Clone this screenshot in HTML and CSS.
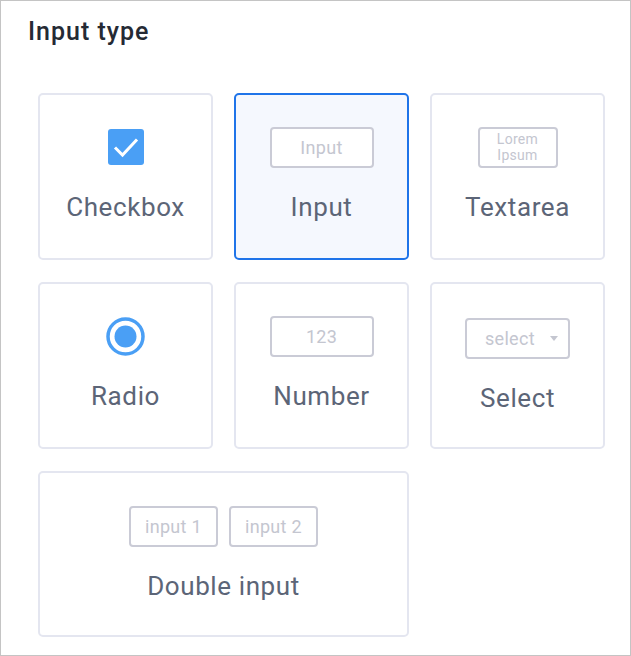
FILE: index.html
```html
<html>
<head>
    <meta charset="utf-8">
    <title>Input type</title>
    <link rel="stylesheet" href="styles.css">
</head>
<body>
    <div class="frame">
        <div class="title">Input type</div>
        <div class="types">
            <div class="card">
                <div class="preview">
                    <svg class="check" width="36" height="36" viewBox="0 0 36 36">
                        <rect x="0" y="0" width="36" height="36" rx="3" fill="#4a9ff5"/>
                        <path d="M7 18.5 L14.5 26 L29 10.5" fill="none" stroke="#fff" stroke-width="3"/>
                    </svg>
                </div>
                <div class="label">Checkbox</div>
            </div>
            <div class="card active">
                <div class="preview">
                    <div class="mini">Input</div>
                </div>
                <div class="label">Input</div>
            </div>
            <div class="card">
                <div class="preview">
                    <div class="mini area">Lorem<br>Ipsum</div>
                </div>
                <div class="label">Textarea</div>
            </div>
            <div class="card">
                <div class="preview">
                    <svg width="39" height="39" viewBox="0 0 39 39">
                        <circle cx="19.5" cy="19.5" r="17.5" fill="none" stroke="#4a9ff5" stroke-width="3.5"/>
                        <circle cx="19.5" cy="19.5" r="11" fill="#4a9ff5"/>
                    </svg>
                </div>
                <div class="label">Radio</div>
            </div>
            <div class="card">
                <div class="preview">
                    <div class="mini">123</div>
                </div>
                <div class="label">Number</div>
            </div>
            <div class="card low">
                <div class="preview">
                    <div class="mini sel">select<span class="arrow"></span></div>
                </div>
                <div class="label">Select</div>
            </div>
            <div class="card wide">
                <div class="preview pair">
                    <div class="mini half">input 1</div>
                    <div class="mini half">input 2</div>
                </div>
                <div class="label">Double input</div>
            </div>
        </div>
    </div>
</body>
</html>
```

FILE: styles.css
```css
* {
    margin: 0;
    padding: 0;
    box-sizing: border-box;
}

body {
    font-family: Roboto, "Liberation Sans", sans-serif;
    background: #fff;
}

.frame {
    width: 631px;
    height: 656px;
    border: 1px solid #c4c4c4;
    padding: 16px 0 0 27px;
}

.title {
    font-size: 25px;
    line-height: 30px;
    font-weight: 500;
    color: #252a34;
    letter-spacing: 1px;
}

.types {
    display: grid;
    grid-template-columns: repeat(3, 175px);
    grid-template-rows: 167px 167px 166px;
    gap: 22px 21px;
    margin: 46px 0 0 10px;
}

.card {
    border: 2px solid #e4e6f0;
    border-radius: 5px;
    display: flex;
    flex-direction: column;
    align-items: center;
    justify-content: center;
    padding-bottom: 4px;
}

.card.active {
    border-color: #1f74e9;
    background: #f5f8fe;
}

.card.low {
    padding: 0;
}

.card.wide {
    grid-column: span 2;
    padding-bottom: 0;
}

.preview {
    height: 41px;
    display: flex;
    align-items: center;
    justify-content: center;
}

.pair {
    gap: 11px;
}

.label {
    margin-top: 24px;
    font-size: 26px;
    line-height: 31px;
    color: #5c6577;
    letter-spacing: 0.6px;
}

.mini {
    width: 104px;
    height: 41px;
    border: 2px solid #cacbd6;
    border-radius: 4px;
    background: #fff;
    color: #c4c6d0;
    font-size: 18px;
    letter-spacing: 0.3px;
    display: flex;
    align-items: center;
    justify-content: center;
}

.mini.area {
    width: 80px;
    font-size: 14px;
    line-height: 16px;
    text-align: center;
}

.mini.sel {
    width: 105px;
    justify-content: flex-start;
    padding-left: 18px;
}

.mini.half {
    width: 89px;
}

.arrow {
    width: 0;
    height: 0;
    border-left: 4px solid transparent;
    border-right: 4px solid transparent;
    border-top: 5px solid #c4c6d0;
    margin-left: 15px;
}
```
